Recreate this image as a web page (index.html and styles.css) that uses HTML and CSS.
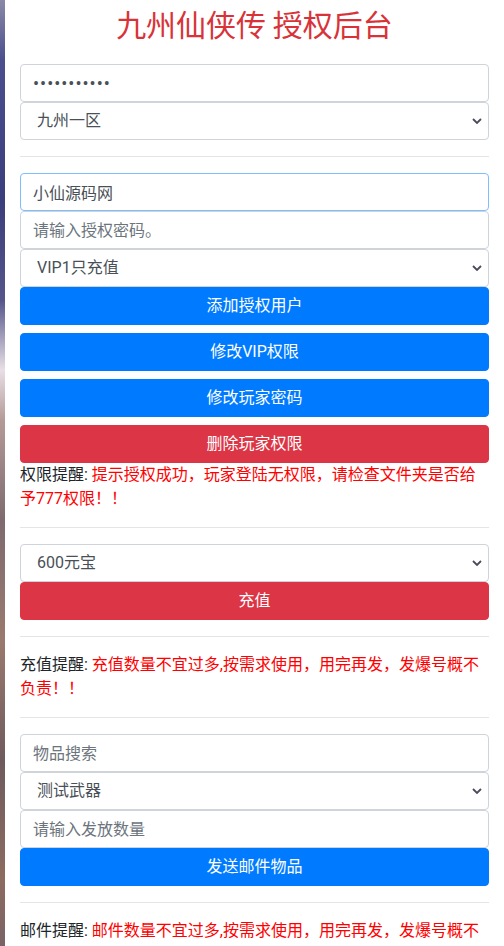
FILE: index.html
```html
<!DOCTYPE html>
<html lang="zh-CN">
<head>
<meta charset="utf-8">
<title>九州仙侠传 授权后台</title>
<link rel="stylesheet" href="styles.css">
</head>
<body>
<div class="page">
  <h3 class="title">九州仙侠传 授权后台</h3>

  <div class="group">
    <input class="control secret" type="password" value="12345678901">
    <select class="control select">
      <option>九州一区</option>
    </select>
  </div>

  <hr class="rule">

  <div class="group">
    <input class="control focused" type="text" value="小仙源码网">
    <input class="control" type="text" placeholder="请输入授权密码。">
    <select class="control select">
      <option>VIP1只充值</option>
    </select>
    <button class="btn btn-primary">添加授权用户</button>
    <button class="btn btn-primary">修改VIP权限</button>
    <button class="btn btn-primary">修改玩家密码</button>
    <button class="btn btn-danger">删除玩家权限</button>
  </div>
  <div class="note"><span class="label">权限提醒: </span><span class="warn">提示授权成功，玩家登陆无权限，请检查文件夹是否给予777权限！！</span></div>

  <hr class="rule">

  <div class="group">
    <select class="control select">
      <option>600元宝</option>
    </select>
    <button class="btn btn-danger">充值</button>
  </div>

  <hr class="rule">

  <div class="note"><span class="label">充值提醒: </span><span class="warn">充值数量不宜过多,按需求使用，用完再发，发爆号概不负责！！</span></div>

  <hr class="rule">

  <div class="group">
    <input class="control" type="text" placeholder="物品搜索">
    <select class="control select">
      <option>测试武器</option>
    </select>
    <input class="control" type="text" placeholder="请输入发放数量">
    <button class="btn btn-primary">发送邮件物品</button>
  </div>

  <hr class="rule">

  <div class="note"><span class="label">邮件提醒: </span><span class="warn">邮件数量不宜过多,按需求使用，用完再发，发爆号概不负责！！</span></div>
</div>
</body>
</html>
```

FILE: styles.css
```css
html, body {
  margin: 0;
  padding: 0;
}

body {
  font-family: Roboto, "Noto Sans CJK SC", sans-serif;
  font-size: 16px;
  line-height: 1.5;
  color: #212529;
  background: linear-gradient(180deg,
    #8a8aa6 0px,
    #4b4f8e 60px,
    #3b3e7c 200px,
    #55558a 300px,
    #e8dfe6 370px,
    #b59a98 420px,
    #7e6a70 520px,
    #9a7a6e 640px,
    #6f5a5e 760px,
    #8c6c60 880px,
    #7a6266 946px);
  min-height: 100vh;
}

.page {
  margin-left: 5px;
  background: #fff;
  padding: 0 15px;
  min-height: 100vh;
  box-sizing: border-box;
  overflow: hidden;
}

.title {
  margin: 0 0 23px;
  padding-top: 5px;
  font-size: 30px;
  line-height: 36px;
  font-weight: 400;
  text-align: center;
  color: #d9333a;
  font-family: "Noto Sans CJK SC", sans-serif;
}

.group {
  display: flex;
  flex-direction: column;
}

.control {
  display: block;
  width: 100%;
  height: 38px;
  box-sizing: border-box;
  margin: 0;
  padding: 6px 12px;
  font-family: Roboto, "Noto Sans CJK SC", sans-serif;
  font-size: 16px;
  line-height: 1.5;
  color: #495057;
  background-color: #fff;
  border: 1px solid #ced4da;
  border-radius: 4px;
  outline: none;
}

.control::placeholder {
  color: #6c757d;
  opacity: 1;
}

.control.focused {
  border-color: #80bdff;
}

.secret {
  font-size: 18px;
  letter-spacing: 1px;
}

.select {
  -webkit-appearance: none;
  appearance: none;
  padding-left: 16px;
  background-image: url("data:image/svg+xml,%3Csvg xmlns='http://www.w3.org/2000/svg' width='10' height='6' viewBox='0 0 10 6'%3E%3Cpath d='M1 1l4 4 4-4' fill='none' stroke='%234a4a5c' stroke-width='1.8'/%3E%3C/svg%3E");
  background-repeat: no-repeat;
  background-position: right 6px center;
  background-size: 10px 6px;
}

.btn {
  display: block;
  width: 100%;
  height: 38px;
  box-sizing: border-box;
  padding: 6px 12px;
  font-family: Roboto, "Noto Sans CJK SC", sans-serif;
  font-size: 16px;
  line-height: 1.5;
  color: #fff;
  text-align: center;
  border: 1px solid transparent;
  border-radius: 4px;
  cursor: pointer;
}

.btn + .btn {
  margin-top: 8px;
}

.btn-primary {
  background-color: #007bff;
  border-color: #007bff;
}

.btn-danger {
  background-color: #dc3545;
  border-color: #dc3545;
}

.rule {
  margin: 16px 0;
  border: 0;
  border-top: 1px solid rgba(0, 0, 0, 0.1);
  height: 0;
}

.note {
  font-size: 16px;
  line-height: 24px;
}

.label {
  color: #212529;
}

.warn {
  color: #ff0000;
}
```
